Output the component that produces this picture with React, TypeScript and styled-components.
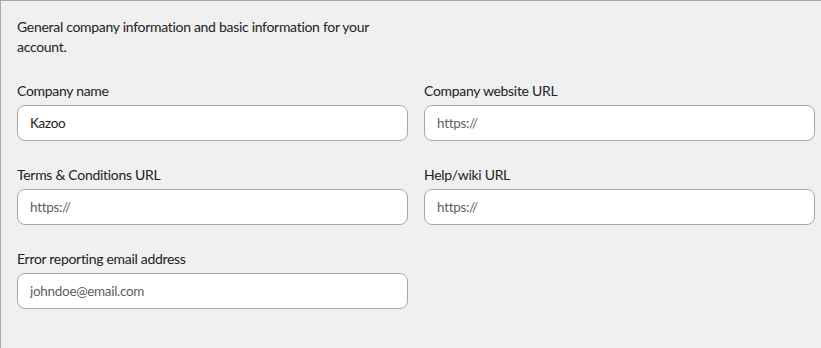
import React from "react";
import styled, { createGlobalStyle } from "styled-components";

const Global = createGlobalStyle`
  html, body { margin: 0; padding: 0; background: #f0f0f0; }
  body { font-family: Lato, "Liberation Sans", sans-serif; }
`;

const Panel = styled.section`
  box-sizing: border-box;
  width: 821px;
  height: 348px;
  background: #f0f0f0;
  border-top: 1px solid #a9a9ad;
  border-left: 1px solid #a9a9ad;
  padding: 16px 6px 0 16px;
  color: #222;
`;

const Intro = styled.p`
  margin: 0 0 25px 0;
  width: 380px;
  font-size: 14px;
  line-height: 20px;
  letter-spacing: -0.3px;
  color: #222;
`;

const Grid = styled.div`
  display: grid;
  grid-template-columns: 391px 391px;
  column-gap: 16px;
  row-gap: 25px;
`;

const Field = styled.label`
  display: flex;
  flex-direction: column;
  gap: 5px;
`;

const Label = styled.span`
  font-size: 14px;
  line-height: 18px;
  letter-spacing: -0.3px;
  color: #222;
`;

const Input = styled.input<{ $filled?: boolean }>`
  box-sizing: border-box;
  height: 36px;
  width: 100%;
  border: 1px solid #a8a8ac;
  border-radius: 8px;
  background: #fff;
  padding: 0 12px;
  font-family: Lato, "Liberation Sans", sans-serif;
  font-size: 13.5px;
  letter-spacing: -0.3px;
  color: ${(p) => (p.$filled ? "#222" : "#555")};
  outline: none;
  &::placeholder { color: #5f5f62; }
`;

export default function App() {
  return (
    <>
      <Global />
      <Panel>
        <Intro>General company information and basic information for your account.</Intro>
        <Grid>
          <Field>
            <Label>Company name</Label>
            <Input $filled defaultValue="Kazoo" />
          </Field>
          <Field>
            <Label>Company website URL</Label>
            <Input placeholder="https://" />
          </Field>
          <Field>
            <Label>Terms &amp; Conditions URL</Label>
            <Input placeholder="https://" />
          </Field>
          <Field>
            <Label>Help/wiki URL</Label>
            <Input placeholder="https://" />
          </Field>
          <Field>
            <Label>Error reporting email address</Label>
            <Input placeholder="johndoe@email.com" />
          </Field>
        </Grid>
      </Panel>
    </>
  );
}
